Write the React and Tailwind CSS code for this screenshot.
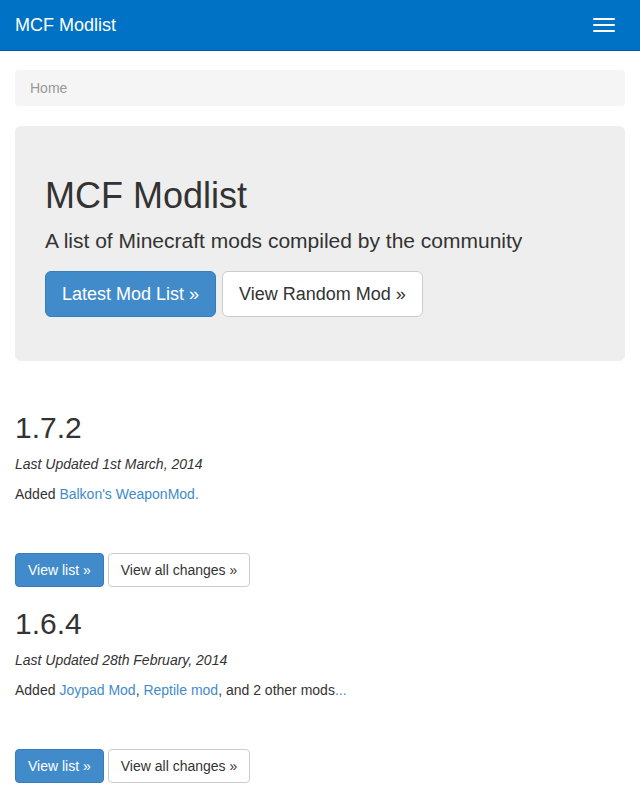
export default function App() {
  const releases = [
    {
      version: "1.7.2",
      updated: "Last Updated 1st March, 2014",
      added: (
        <>
          Added <a href="#" className="text-[#428bca]">Balkon's WeaponMod</a>
          <span className="text-[#428bca]">.</span>
        </>
      ),
    },
    {
      version: "1.6.4",
      updated: "Last Updated 28th February, 2014",
      added: (
        <>
          Added <a href="#" className="text-[#428bca]">Joypad Mod</a>,{" "}
          <a href="#" className="text-[#428bca]">Reptile mod</a>, and 2 other mods
          <span className="text-[#428bca]">...</span>
        </>
      ),
    },
  ];

  return (
    <div className="min-h-[800px] bg-white text-[14px] leading-[20px] text-[#333] font-['Liberation_Sans',Arial,sans-serif]">
      <nav className="h-[51px] bg-[#0072c6] border-b border-[#005a9e] flex items-center justify-between">
        <a href="#" className="pl-[15px] text-[18px] leading-[20px] text-white">MCF Modlist</a>
        <button className="mr-[15px] px-[10px] py-[9px] flex flex-col gap-[4px]">
          <span className="block w-[22px] h-[2px] bg-white rounded-[1px]" />
          <span className="block w-[22px] h-[2px] bg-white rounded-[1px]" />
          <span className="block w-[22px] h-[2px] bg-white rounded-[1px]" />
        </button>
      </nav>

      <div className="px-[15px] flex flex-col">
        <ol className="mt-[19px] mb-[20px] bg-[#f5f5f5] rounded-[4px] px-[15px] py-[8px]">
          <li className="text-[#999]">Home</li>
        </ol>

        <div className="bg-[#eee] rounded-[6px] px-[30px] pt-[30px] pb-[29px] mb-[30px] flex flex-col items-start">
          <h1 className="mt-[20px] mb-[10px] text-[36px] leading-[39.6px] font-normal text-[#333]">MCF Modlist</h1>
          <p className="mb-[15px] text-[21px] leading-[30px] font-light">A list of Minecraft mods compiled by the community</p>
          <p className="mb-[15px] flex gap-[6px]">
            <a href="#" className="px-[16px] py-[10px] text-[18px] leading-[24px] rounded-[6px] border border-[#357ebd] bg-[#428bca] text-white">
              Latest Mod List »
            </a>
            <a href="#" className="px-[16px] py-[10px] text-[18px] leading-[24px] rounded-[6px] border border-[#ccc] bg-white text-[#333]">
              View Random Mod »
            </a>
          </p>
        </div>

        {releases.map((r) => (
          <div key={r.version} className="flex flex-col items-start">
            <h2 className="mt-[20px] mb-[10px] text-[30px] leading-[33px] font-normal">{r.version}</h2>
            <p className="mb-[10px] italic">{r.updated}</p>
            <p className="mb-[10px]">{r.added}</p>
            <div className="mt-[39px] flex gap-[4px]">
              <a href="#" className="px-[12px] py-[6px] rounded-[4px] border border-[#357ebd] bg-[#428bca] text-white">
                View list »
              </a>
              <a href="#" className="px-[12px] py-[6px] rounded-[4px] border border-[#ccc] bg-white text-[#333]">
                View all changes »
              </a>
            </div>
          </div>
        ))}
      </div>
    </div>
  );
}
